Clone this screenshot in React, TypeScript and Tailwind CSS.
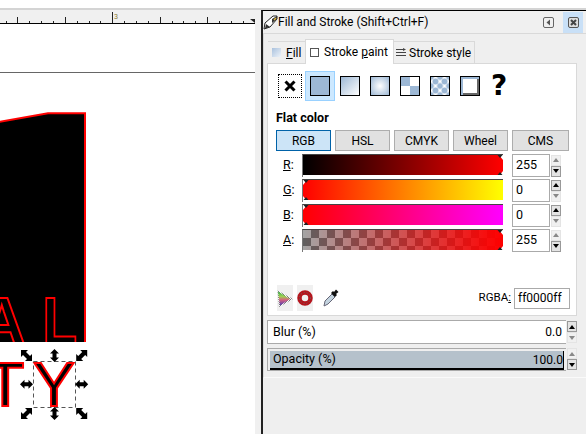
const ticks = Array.from({ length: 22 }, (_, i) => 5.6 + i * 11.86);

function Ruler() {
  return (
    <svg width="255" height="14" className="block bg-[#f0f0f0]">
      {ticks.map((x, i) => (
        <rect key={i} x={Math.round(x)} y={(i % 4) === 1 ? 7 : 11} width="1" height={(i % 4) === 1 ? 6 : 2} fill="#222" />
      ))}
      <rect x="112" y="2" width="1" height="11" fill="#222" />
      <text x="114" y="9" fontSize="7" fill="#8a7a30" fontFamily="Liberation Sans">3</text>
      <rect x="0" y="13" width="255" height="1" fill="#000" />
      <path d="M250 9h5v4z" fill="#222" />
    </svg>
  );
}

function Handle({ x, y, kind }: { x: number; y: number; kind: string }) {
  const straight = 'M-6.5 0L-2 -4.5V-2H2V-4.5L6.5 0L2 4.5V2H-2V4.5Z';
  const corner = 'M-5.5 -5.5H1.5L-0.5 -3.5L3.5 0.5L5.5 -1.5V5.5H-1.5L0.5 3.5L-3.5 -0.5L-5.5 1.5Z';
  const rot: Record<string, number> = { h: 0, v: 90, tl: 0, tr: 90, br: 180, bl: 270 };
  return <path d={kind === 'h' || kind === 'v' ? straight : corner} transform={`translate(${x} ${y}) rotate(${rot[kind]})`} fill="#000" />;
}

function Canvas() {
  return (
    <div className="relative flex-1 bg-white">
      <div className="mt-[48px] h-px bg-[#666]" />
      <svg width="255" height="400" className="absolute left-0 top-0 font-['Liberation_Sans',sans-serif]">
        <defs>
          <clipPath id="art">
            <rect x="0" y="0" width="85" height="318" />
          </clipPath>
        </defs>
        <path d="M-2 98L48 89.3H85V319H-2Z" fill="#000" stroke="#f00" strokeWidth="2" />
        <rect x="0" y="318" width="90" height="4" fill="#fff" />
        <g clipPath="url(#art)">
          <text x="-22" y="320" fontSize="66" fontWeight="700" fill="#000" stroke="#f00" strokeWidth="2">A</text>
          <text transform="translate(42.5 320) scale(0.86 1)" fontSize="66" fontWeight="700" fill="#000" stroke="#f00" strokeWidth="2">L</text>
        </g>
        <text x="-14" y="382" fontSize="63" fill="#000" stroke="#f00" strokeWidth="2">T</text>
        <text x="33" y="382" fontSize="63" fill="#000" stroke="#f00" strokeWidth="2">Y</text>
        <rect x="33.5" y="337.5" width="42" height="46" fill="none" stroke="#555" strokeDasharray="4 3" />
        <Handle x={26.5} y={331.5} kind="tl" />
        <Handle x={81.7} y={331.5} kind="tr" />
        <Handle x={81.7} y={389.5} kind="br" />
        <Handle x={26.5} y={389.5} kind="bl" />
        <Handle x={54.5} y={331.5} kind="v" />
        <Handle x={54.5} y={389.5} kind="v" />
        <Handle x={26.5} y={360.3} kind="h" />
        <Handle x={81.7} y={360.3} kind="h" />
      </svg>
    </div>
  );
}

function TitleBar() {
  return (
    <div className="flex h-[22px] items-center bg-[#f0f0f0]">
      <svg width="15" height="15" viewBox="0 0 15 15" className="shrink-0">
        <path d="M1 14L2 8L10 1H14V4L7 12Z" fill="#fff" stroke="#222" />
        <path d="M2 13.5L3 9L7 12Z M9 4L14 1V4L9 8Z" fill="#333" />
        <path d="M11 5L13 3" stroke="#d9b43a" strokeWidth="1.5" />
      </svg>
      <span className="text-[12px] text-black">Fill and Stroke (Shift+Ctrl+F)</span>
      <div className="ml-auto flex items-center">
        <svg width="11" height="11" viewBox="0 0 11 11" className="mr-[9px]">
          <rect x="0.5" y="0.5" width="10" height="10" rx="1.5" fill="#f0f0f0" stroke="#666" />
          <path d="M7 2.5V8.5L3.5 5.5Z" fill="#555" />
        </svg>
        <div className="mr-[3px] flex h-[21px] w-[20px] items-center justify-center bg-[#c9e0f7]">
          <svg width="11" height="11" viewBox="0 0 11 11">
            <rect x="0.5" y="0.5" width="10" height="10" rx="1.5" fill="#ddd" stroke="#555" />
            <path d="M3 3L8 8M8 3L3 8" stroke="#444" strokeWidth="2" />
          </svg>
        </div>
      </div>
    </div>
  );
}

function Tabs() {
  return (
    <div className="flex h-[29px] items-end whitespace-nowrap pl-[4px] text-[12px]">
      <div className="flex h-[22px] w-[38px] items-center border-t border-[#d9d9d9] pl-[4px]">
        <div className="h-[9px] w-[9px] bg-[linear-gradient(135deg,#a9c1dd,#eef3f9)]" />
        <span className="ml-[5px]"><span className="underline">F</span>ill</span>
      </div>
      <div className="relative top-px -ml-px flex h-[25px] w-[89px] items-center border border-b-0 border-[#d9d9d9] bg-white pl-[4px]">
        <div className="h-[9px] w-[9px] border border-[#555]" />
        <span className="ml-[5px]">Stroke <span className="underline">p</span>aint</span>
      </div>
      <div className="flex h-[22px] w-[81px] items-center border border-b-0 border-l-0 border-[#d9d9d9] pl-[2px]">
        <svg width="10" height="9" viewBox="0 0 10 9">
          <path d="M0 1.5H7M0 4.5H10M0 7.5H10" stroke="#444" />
          <path d="M7 0L10 1.5L7 3Z" fill="#444" />
        </svg>
        <span className="ml-[3px]">Stroke style</span>
      </div>
    </div>
  );
}

function Swatch({ className }: { className: string }) {
  return <div className={`h-[20px] w-[20px] border border-black ${className}`} />;
}

function PaintButtons() {
  return (
    <div className="flex h-[30px] items-center pl-[10px]">
      <div className="flex h-[24px] w-[24px] items-center justify-center border border-dotted border-black">
        <svg width="12" height="12" viewBox="0 0 12 12">
          <path d="M1.5 1.5L10.5 10.5M10.5 1.5L1.5 10.5" stroke="#000" strokeWidth="3" />
        </svg>
      </div>
      <div className="ml-[3px] flex h-[30px] w-[30px] items-center justify-center border border-[#99d1ff] bg-[#cce8ff]">
        <Swatch className="bg-[#9db8d5]" />
      </div>
      <div className="ml-[5px] flex gap-[10px]">
        <Swatch className="bg-[linear-gradient(135deg,#9db8d5,#ffffff)]" />
        <Swatch className="bg-[radial-gradient(circle,#ffffff,#9db8d5)]" />
        <Swatch className="bg-[conic-gradient(#fff_0_25%,#9db8d5_0_50%,#fff_0_75%,#9db8d5_0)]" />
        <Swatch className="bg-[radial-gradient(circle,#9db8d5_2.6px,transparent_3.4px),radial-gradient(circle,#9db8d5_2.6px,#fff_3.4px)] [background-position:0_0,4.5px_4.5px] [background-size:9px_9px]" />
        <div className="flex h-[20px] w-[20px] items-center justify-center border border-black bg-[#9db8d5]">
          <div className="h-[14px] w-[14px] bg-white shadow-[1px_1px_0_1px_#666]" />
        </div>
      </div>
      <span className="ml-[11px] font-['DejaVu_Sans',sans-serif] text-[28px] font-bold leading-none text-black">?</span>
    </div>
  );
}

const modes = ['RGB', 'HSL', 'CMYK', 'Wheel', 'CMS'];

function ModeButtons() {
  return (
    <div className="mt-[4px] flex gap-[4px] pl-[8px]">
      {modes.map((mode, i) => (
        <div
          key={mode}
          className={`flex h-[21px] items-center justify-center border text-[12px] ${i === 4 ? 'w-[57px]' : 'w-[55px]'} ${i === 0 ? 'border-[#0062a8] bg-[#cce4f7]' : 'border-[#adadad] bg-[#e1e1e1]'}`}
        >
          {mode}
        </div>
      ))}
    </div>
  );
}

function SpinArrows({ up, dark }: { up: boolean; dark: boolean }) {
  return (
    <div className={`flex h-[11px] w-[10px] items-center justify-center border ${dark ? 'border-[#999] bg-[#e4e4e4]' : 'border-[#e4e4e4] bg-[#f0f0f0]'}`}>
      <svg width="6" height="4" viewBox="0 0 6 4">
        <path d={up ? 'M3 0L6 4H0Z' : 'M0 0H6L3 4Z'} fill={dark ? '#000' : '#888'} />
      </svg>
    </div>
  );
}

function Spin({ upActive }: { upActive: boolean }) {
  return (
    <div className="flex flex-col">
      <SpinArrows up dark={upActive} />
      <SpinArrows up={false} dark={!upActive} />
    </div>
  );
}

const channels = [
  { label: 'R', value: '255', right: true, bar: 'bg-[linear-gradient(to_right,#000,#f00)]' },
  { label: 'G', value: '0', right: false, bar: 'bg-[linear-gradient(to_right,#f00,#ff0)]' },
  { label: 'B', value: '0', right: false, bar: 'bg-[linear-gradient(to_right,#f00,#f0f)]' },
  {
    label: 'A',
    value: '255',
    right: true,
    bar: 'bg-[linear-gradient(to_right,rgba(255,0,0,0),#f00),repeating-conic-gradient(#606060_0_25%,#a4a4a4_0_50%)] [background-size:100%_100%,16px_16px]',
  },
];

function Marker({ right }: { right: boolean }) {
  const pos = right ? 'right-0' : 'left-0';
  return (
    <svg width="8" height="23" viewBox="0 0 8 23" className={`absolute top-0 ${pos}`}>
      {right ? (
        <>
          <path d="M4 0H8V5Z M4 21H8V16Z" fill="#fff" />
          <path d="M2.5 0H7.5L5 3Z M2.5 20H7.5L5 17Z" fill="#222" />
        </>
      ) : (
        <>
          <path d="M0 0H4L0 5Z M0 21H4L0 16Z" fill="#fff" />
          <path d="M0.5 0H5.5L3 3Z M0.5 20H5.5L3 17Z" fill="#222" />
        </>
      )}
    </svg>
  );
}

function ChannelRow({ label, value, right, bar }: (typeof channels)[number]) {
  return (
    <div className="flex h-[23px] items-center">
      <span className="w-[34px] pl-[15px] text-[12.5px]"><span className="underline">{label}</span>:</span>
      <div className="relative h-[23px] w-[201px] border-l border-t border-l-[#777] border-t-[#444] pb-[2px]">
        <div className={`h-full w-full ${bar}`} />
        <Marker right={right} />
      </div>
      <div className="ml-[9px] flex h-[23px] w-[38px] items-center border border-[#aaa] pl-[3px] text-[12.5px]">{value}</div>
      <div className="ml-px">
        <Spin upActive={!right} />
      </div>
    </div>
  );
}

function BottomTools() {
  return (
    <div className="mt-[33px] flex h-[26px] items-center pl-[9px]">
      <div className="flex h-[26px] w-[16px] items-center justify-center bg-[#f0f0f0]">
        <svg width="16" height="17" viewBox="0 0 16 17">
          <defs>
            <pattern id="check" width="2" height="2" patternUnits="userSpaceOnUse">
              <rect width="2" height="2" fill="#fff" />
              <rect width="1" height="1" fill="#777" />
              <rect x="1" y="1" width="1" height="1" fill="#777" />
            </pattern>
            <linearGradient id="gamut" x1="0" y1="0" x2="0" y2="1">
              <stop offset="0" stopColor="#35b04a" />
              <stop offset="0.35" stopColor="#9ccf52" />
              <stop offset="0.6" stopColor="#d8607f" />
              <stop offset="1" stopColor="#4a3fb8" />
            </linearGradient>
          </defs>
          <path d="M0.5 0.5L16 9L2 17Z" fill="url(#check)" />
          <path d="M1 1.5L13 9L3 15.5Z" fill="url(#gamut)" />
        </svg>
      </div>
      <div className="ml-[4px] flex h-[26px] w-[16px] items-center justify-center bg-[#f0f0f0]">
        <svg width="16" height="16" viewBox="0 0 16 16">
          <circle cx="8" cy="8" r="5.5" fill="none" stroke="#b5141c" strokeWidth="4.5" />
          <circle cx="8" cy="8" r="5.5" fill="none" stroke="#666" strokeWidth="1" strokeDasharray="1 2" />
        </svg>
      </div>
      <svg width="16" height="18" viewBox="0 0 16 18" className="ml-[10px]">
        <path d="M1 17L2 12L9 5L12 8L5 15Z" fill="#c3d3df" stroke="#667" strokeWidth="1" />
        <path d="M8 4L10 2L11 3L13 0.5L15.5 3L13 5L14 6L12 8Z" fill="#111" />
      </svg>
      <span className="ml-auto text-[11.5px]">RGBA<span className="underline">:</span></span>
      <div className="ml-[3px] mr-[6px] flex h-[21px] w-[56px] items-center border border-[#aaa] pl-[3px] text-[12px]">ff0000ff</div>
    </div>
  );
}

function BlurRow() {
  return (
    <div className="flex items-start pl-[3px]">
      <div className="flex h-[24px] w-[299px] items-center justify-between border-y border-l border-[#aaa] bg-white pl-[5px] pr-[4px] text-[12.5px]">
        <span>Blur (%)</span>
        <span className="text-[12px]">0.0</span>
      </div>
      <div className="ml-px mt-[1px]">
        <Spin upActive />
      </div>
    </div>
  );
}

function OpacityRow() {
  return (
    <div className="mt-[4px] flex items-start pl-[3px]">
      <div className="h-[23px] w-[299px] border-y border-l border-[#aaa] pl-[2px] pt-[2px]">
        <div className="flex h-[19px] w-[294px] items-center justify-between border-b-2 border-r border-black bg-[#b5c1cb] pl-[3px] text-[12.5px]">
          <span>Opacity (%)</span>
          <span className="text-[12px]">100.0</span>
        </div>
      </div>
      <div className="ml-px">
        <Spin upActive={false} />
      </div>
    </div>
  );
}

function FillStrokeDialog() {
  return (
    <div className="flex w-[325px] flex-col border-l-2 border-t border-l-[#222] border-t-black bg-[#efefef] text-black">
      <TitleBar />
      <div className="h-[345px] border-b border-l border-t border-b-[#fafafa] border-l-[#d9d9d9] border-t-[#d9d9d9] pr-[9px]">
        <Tabs />
        <div className="ml-[3px] h-[253px] border border-[#d9d9d9] bg-white pt-[7px]">
          <PaintButtons />
          <div className="mt-[9px] pl-[8px] text-[12.5px] font-bold leading-[16px]">Flat color</div>
          <ModeButtons />
          <div className="mt-[3px] flex flex-col gap-[2px]">
            {channels.map((channel) => (
              <ChannelRow key={channel.label} {...channel} />
            ))}
          </div>
          <BottomTools />
        </div>
        <div className="mt-[4px]">
          <BlurRow />
          <OpacityRow />
        </div>
      </div>
    </div>
  );
}

export default function App() {
  return (
    <div className="flex h-[434px] w-[586px] flex-col overflow-hidden bg-white font-['Roboto',sans-serif]">
      <div className="h-[8px] shrink-0" />
      <div className="flex min-h-0 flex-1 border-t-2 border-[#d4d4d4]">
        <div className="flex w-[255px] flex-col">
          <Ruler />
          <Canvas />
        </div>
        <div className="w-[6px] bg-[#f0f0f0]" />
        <FillStrokeDialog />
      </div>
    </div>
  );
}
